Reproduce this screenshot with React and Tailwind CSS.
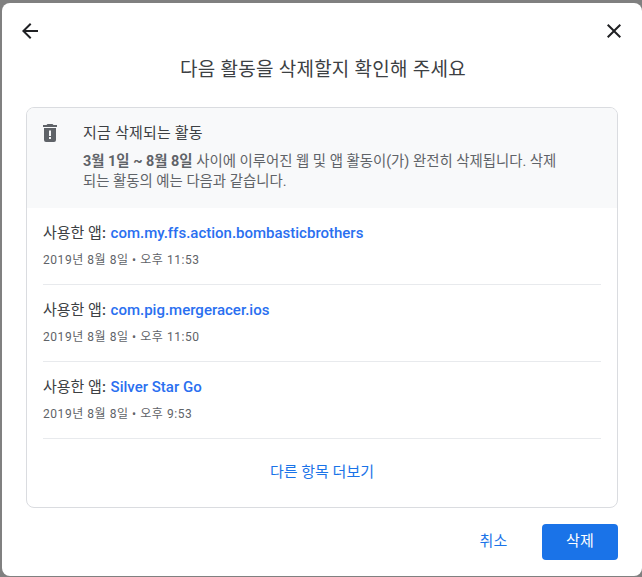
const activities = [
  { app: 'com.my.ffs.action.bombasticbrothers', time: '2019년 8월 8일 • 오후 11:53' },
  { app: 'com.pig.mergeracer.ios', time: '2019년 8월 8일 • 오후 11:50' },
  { app: 'Silver Star Go', time: '2019년 8월 8일 • 오후 9:53' },
];

const App = () => {
  return (
    <div className="w-[642px] h-[577px] overflow-hidden bg-[#808080] pt-[3px] pl-[2px] pb-px font-['Roboto','Noto_Sans_CJK_KR',sans-serif]">
      <div className="h-full bg-white rounded-lg flex flex-col">
        <div className="flex justify-between items-center pt-[16px] pl-[16px] pr-[16px] h-[40px]">
          <svg width="24" height="24" viewBox="0 0 24 24" fill="#202124">
            <path d="M20 11H7.83l5.59-5.59L12 4l-8 8 8 8 1.41-1.41L7.83 13H20v-2z" />
          </svg>
          <svg width="24" height="24" viewBox="0 0 24 24" fill="#202124">
            <path d="M19 6.41 17.59 5 12 10.59 6.41 5 5 6.41 10.59 12 5 17.59 6.41 19 12 13.41 17.59 19 19 17.59 13.41 12z" />
          </svg>
        </div>
        <h1 className="text-center pl-[2px] text-[19px] tracking-[0.25px] leading-[24px] text-[#3c4043] mt-[15px] font-normal">
          다음 활동을 삭제할지 확인해 주세요
        </h1>

        <div className="ml-[24px] mr-[24px] mt-[25px] h-[401px] border border-[#dadce0] rounded-lg overflow-hidden flex flex-col">
          <div className="bg-[#f8f9fa] h-[100px] flex pl-[16px] pr-[16px] pt-[14px]">
            <svg width="14" height="18" viewBox="0 0 14 18" className="mt-[2px] shrink-0 text-[#5f6368]" fill="currentColor">
              <path d="M4.5 0h5l1 1H14v2H0V1h3.5l1-1Z" />
              <path fillRule="evenodd" d="M1 4h12v12a2 2 0 0 1-2 2H3a2 2 0 0 1-2-2V4Zm5 2.5V12h2V6.500H6Zm0 6.500v2h2v-2H6Z" />
            </svg>
            <div className="ml-[26px] pt-px">
              <div className="text-[15px] tracking-[0.2px] leading-[20px] text-[#3c4043]">지금 삭제되는 활동</div>
              <p className="text-[14.4px] leading-[20px] text-[#5f6368] mt-[9px]">
                <span className="font-bold">3월 1일 ~ 8월 8일</span> 사이에 이루어진 웹 및 앱 활동이(가) 완전히 삭제됩니다. 삭제
                <br />
                되는 활동의 예는 다음과 같습니다.
              </p>
            </div>
          </div>

          <div className="pl-[16px] pr-[16px]">
            {activities.map((a) => (
              <div key={a.app} className="h-[77px] border-b border-[#e8eaed] pt-[15px]">
                <div className="text-[15px] leading-[20px] text-[#3c4043]">
                  사용한 앱<span className="font-medium">: </span>
                  <span className="font-medium text-[#2a6ff0] ml-px">{a.app}</span>
                </div>
                <div className="text-[12px] tracking-[0.55px] leading-[16px] text-[#5f6368] mt-[9px]">{a.time}</div>
              </div>
            ))}
          </div>

          <div className="text-center text-[15px] leading-[20px] text-[#1a73e8] mt-[23px]">
            다른 항목 더보기
          </div>
        </div>

        <div className="flex justify-end items-center mr-[24px] mt-[16px] gap-[16px]">
          <button className="w-[68px] h-[36px] pb-px pl-[3px] text-[15px] tracking-[0.2px] text-[#1a73e8]">취소</button>
          <button className="w-[76px] h-[36px] pb-px rounded bg-[#1a73e8] text-[15px] tracking-[0.2px] text-white">삭제</button>
        </div>
      </div>
    </div>
  );
};

export default App;
